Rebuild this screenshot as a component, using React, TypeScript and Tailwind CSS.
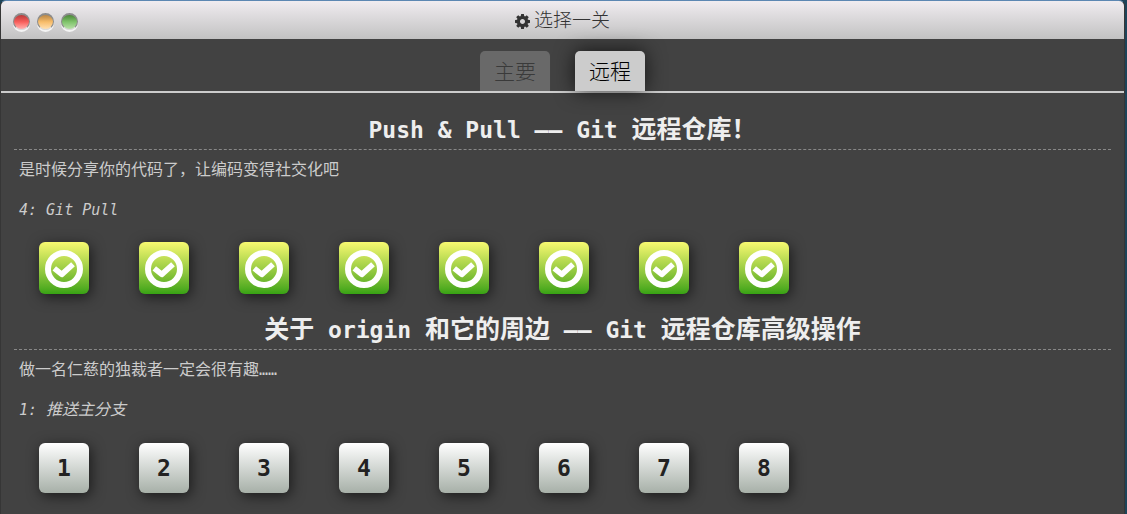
import React, { useState } from "react";

const CJK_STACK = "font-['Liberation_Sans','Noto_Sans_CJK_SC',sans-serif]";

type Level = { id: number; solved: boolean };
type Part = { text: string; mono?: boolean };
type Series = {
  key: string;
  title: Part[];
  about: Part[];
  status: Part[];
  levels: Level[];
};

const makeLevels = (solved: boolean): Level[] =>
  [1, 2, 3, 4, 5, 6, 7, 8].map((id) => ({ id, solved }));

const SERIES: Series[] = [
  {
    key: "push-pull",
    title: [{ text: "Push & Pull —— Git ", mono: true }, { text: "远程仓库！" }],
    about: [{ text: "是时候分享你的代码了，让编码变得社交化吧" }],
    status: [{ text: "4: Git Pull", mono: true }],
    levels: makeLevels(true),
  },
  {
    key: "origin",
    title: [
      { text: "关于" },
      { text: " origin ", mono: true },
      { text: "和它的周边" },
      { text: " —— Git ", mono: true },
      { text: "远程仓库高级操作" },
    ],
    about: [{ text: "做一名仁慈的独裁者一定会很有趣" }, { text: "……", mono: true }],
    status: [{ text: "1: ", mono: true }, { text: "推送主分支" }],
    levels: makeLevels(false),
  },
];

function Mixed({ parts, monoClass }: { parts: Part[]; monoClass: string }) {
  return (
    <span className="whitespace-pre">
      {parts.map((part, i) => (
        <span key={i} className={part.mono ? monoClass : ""}>
          {part.text}
        </span>
      ))}
    </span>
  );
}

function Gear() {
  return (
    <svg viewBox="0 -128 1536 1536" className="size-[15px] fill-[#333]" aria-hidden="true">
      <path d="M1024 640q0-106-75-181t-181-75-181 75-75 181 75 181 181 75 181-75 75-181zm512-109v222q0 12-8 23t-20 13l-185 28q-19 54-39 91 35 50 107 138 10 12 10 25t-9 23q-27 37-99 108t-94 71q-12 0-26-9l-138-108q-44 23-91 38-16 136-29 186-7 28-36 28h-222q-14 0-24.5-8.5t-11.5-21.5l-28-184q-49-16-90-37l-141 107q-10 9-25 9-14 0-25-11-126-114-165-168-7-10-7-23 0-12 8-23 15-21 51-66.5t54-70.5q-27-50-41-99l-183-27q-13-2-21-12.5t-8-23.5v-222q0-12 8-23t19-13l186-28q14-46 39-92-40-57-107-138-10-12-10-24 0-10 9-23 26-36 98.5-107.5t94.5-71.5q13 0 26 10l138 107q44-23 91-38 16-136 29-186 7-28 36-28h222q14 0 24.5 8.5t11.5 21.5l28 184q49 16 90 37l142-107q9-9 24-9 13 0 25 10 129 119 165 170 7 8 7 22 0 12-8 23-15 21-51 66.5t-54 70.5q26 50 41 98l183 28q13 2 21 12.5t8 23.5z" />
    </svg>
  );
}

function CheckCircle() {
  return (
    <svg viewBox="0 0 38 38" className="size-[38px] fill-none stroke-white" aria-hidden="true">
      <circle cx="19" cy="19" r="16" strokeWidth="6" />
      <path d="M9.3 18.4L16.8 24.4L28 14.2" strokeWidth="5.6" strokeLinejoin="round" />
    </svg>
  );
}

function WindowDot({ label, tone }: { label: string; tone: string }) {
  return (
    <button
      type="button"
      aria-label={label}
      className={`size-[17px] rounded-full border border-t-2 border-[#8c8c8c] border-b-[#ddd] shadow-[0_2px_0_#f4f4f4] ${tone}`}
    />
  );
}

function LevelButton({ level }: { level: Level }) {
  const base =
    "flex w-[50px] items-center justify-center rounded-md shadow-[2px_3px_14px_rgba(0,0,0,0.6)]";
  return level.solved ? (
    <button
      type="button"
      aria-label={`${level.id}`}
      className={`${base} h-[52px] bg-linear-to-b from-[#f7f970] to-[#36a314] pt-[2px]`}
    >
      <CheckCircle />
    </button>
  ) : (
    <button
      type="button"
      className={`${base} h-[50px] bg-linear-to-b from-white to-[#a7b0a8] font-['DejaVu_Sans_Mono',monospace] text-[23px] font-bold text-[#222]`}
    >
      {level.id}
    </button>
  );
}

function SeriesBlock({ series }: { series: Series }) {
  return (
    <section className="h-[200px]">
      <h2 className="flex h-10 items-center justify-center border-b border-dashed border-[#888] text-[25px] leading-10 font-bold text-[#eee]">
        <Mixed parts={series.title} monoClass="font-['DejaVu_Sans_Mono',monospace] text-[23px]" />
      </h2>
      <div className="px-[5px] text-base text-[#ccc]">
        <p className="h-10 leading-10">
          <Mixed parts={series.about} monoClass="font-['DejaVu_Sans_Mono',monospace] text-[15px]" />
        </p>
        <p className="h-10 leading-10 italic">
          <Mixed parts={series.status} monoClass="font-['DejaVu_Sans_Mono',monospace] text-[15px]" />
        </p>
      </div>
      <div className="mt-3 flex h-[52px] items-center gap-[50px] px-[25px]">
        {series.levels.map((level) => (
          <LevelButton key={level.id} level={level} />
        ))}
      </div>
    </section>
  );
}

export default function App() {
  const [tab, setTab] = useState("远程");
  return (
    <div className={`min-h-screen bg-[#1d4459] pr-[2px] ${CJK_STACK}`}>
      <main className="min-h-screen overflow-hidden rounded-t-md border-x border-t border-x-[#363636] border-t-[#5c87b2] bg-[#424242]">
        <header className="grid h-[38px] grid-cols-[1fr_auto_1fr] items-center bg-linear-to-b from-[#f0ecf0] to-[#c2c2c2] px-3 pt-[3px]">
          <div className="flex gap-[7px]">
            <WindowDot label="关闭" tone="bg-linear-to-b from-[#b93b3b] via-[#f95f5c] to-[#ffb0b0]" />
            <WindowDot label="最小化" tone="bg-linear-to-b from-[#b98748] via-[#f8bd6a] to-[#ffe0b0]" />
            <WindowDot label="最大化" tone="bg-linear-to-b from-[#4c8838] via-[#80c46c] to-[#b8e0a8]" />
          </div>
          <h1 className="flex items-center gap-1 text-[19px] font-light text-[#333]">
            <Gear />
            选择一关
          </h1>
        </header>
        <nav className="flex items-end justify-center gap-[25px] border-b-2 border-[#ccc] pt-3">
          {["主要", "远程"].map((name) => (
            <button
              key={name}
              type="button"
              onClick={() => setTab(name)}
              className={`h-10 w-[70px] rounded-t-[5px] pt-[2px] text-[21px] font-light ${
                tab === name
                  ? "bg-[#ccc] text-black shadow-[0_0_20px_rgba(0,0,0,0.7)]"
                  : "bg-[#696969] text-[#3a3a3a]"
              }`}
            >
              {name}
            </button>
          ))}
        </nav>
        <div className="px-[13px] pt-[17px]">
          {SERIES.map((series) => (
            <SeriesBlock key={series.key} series={series} />
          ))}
        </div>
      </main>
    </div>
  );
}
